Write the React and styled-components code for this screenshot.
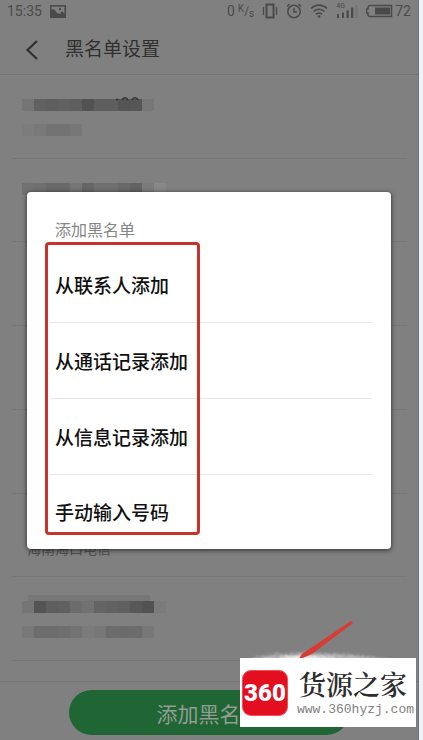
import styled, { createGlobalStyle } from 'styled-components';

const contacts = [
	{
		name: ['#757575', '#616161', '#5f5f5f', '#616161', '#5f5f5f', '#525252', '#5e5e5e', '#5e5e5e', '#555555', '#565656', '#777777'],
		place: ['#7c7c7c', '#797979', '#727272', '#727272', '#777777'],
		digits: true,
	},
	{
		name: ['#727272', '#707070', '#6a6a6a', '#6a6a6a', '#757575', '#666666', '#707070', '#707070', '#696969', '#636363', '#7b7b7b', '#888888'],
	},
	{},
	{},
	{},
	{ placeText: '海南海口电信' },
	{
		name: ['#767676', '#545454', '#5e5e5e', '#606060', '#6c6c6c', '#727272', '#646464', '#626262', '#606060', '#585858', '#525252', '#7b7b7b'],
		place: ['#787878', '#6d6d6d', '#6d6d6d', '#6f6f6f', '#737373', '#7b7b7b', '#777777', '#6c6c6c', '#6b6b6b', '#6c6c6c', '#777777'],
		shade: true,
	},
];

const options = ['从联系人添加', '从通话记录添加', '从信息记录添加', '手动输入号码'];

const Mosaic = ({ cells, children }) => (
	<MosaicLine>
		{cells.map((color, i) => (
			<MosaicCell key={i} $color={color} />
		))}
		{children}
	</MosaicLine>
);

const StatusIcons = () => (
	<StatusGroup>
		<Speed>
			0
			<SpeedUnit>
				<sup>K</sup>/<sub>s</sub>
			</SpeedUnit>
		</Speed>
		<svg width='16' height='16' viewBox='0 0 16 16' fill='none' stroke='currentColor'>
			<rect x='4.5' y='1.5' width='7' height='13' strokeWidth='2' />
			<path d='M1.5 4v8M14.5 4v8' strokeWidth='1.3' />
		</svg>
		<svg width='16' height='16' viewBox='0 0 16 16' fill='none' stroke='currentColor' strokeWidth='1.5'>
			<circle cx='8' cy='8.5' r='6.2' />
			<path d='M8 5v4h3M1 3.5 3.5 1M15 3.5 12.5 1' />
		</svg>
		<svg width='18' height='16' viewBox='0 0 18 16' fill='none' stroke='currentColor' strokeWidth='1.7'>
			<path d='M1 5.5C5.5 1 12.5 1 17 5.5M3.5 8.5c3-3 8-3 11 0M6 11.3c1.700-1.600 4.300-1.600 6 0' />
			<circle cx='9' cy='13.500' r='1.300' fill='currentColor' stroke='none' />
		</svg>
		<Signal>
			<Network>4G</Network>
			<svg width='22' height='16' viewBox='0 0 22 16' fill='currentColor'>
				<path d='M1 11h2v4H1zM6 9.500h2V15H6zM10.500 7.500h2.300V15h-2.300zM15 4.500h2.300V15H15z' />
				<path d='M19.500 2h2v13h-2z' opacity='.25' />
			</svg>
		</Signal>
		<Battery>
			<svg width='27' height='14' viewBox='1 0 27 14'>
				<path
					d='M5 1.500h21.500v11H5a2 2 0 0 1-2-2V9H1.500V5H3V3.500a2 2 0 0 1 2-2z'
					fill='none'
					stroke='currentColor'
					strokeWidth='1.500'
				/>
				<path d='M10 3.500h15v7H10z' fill='currentColor' />
			</svg>
			72
		</Battery>
	</StatusGroup>
);

const App = () => {
	return (
		<Page>
			<GlobalStyle />
			<Screen>
				<StatusBar>
					<StatusGroup>
						<span>15:35</span>
						<svg width='16' height='13' viewBox='0 0 16 13'>
							<rect x='.8' y='.8' width='14.400' height='11.400' fill='none' stroke='currentColor' strokeWidth='1.600' />
							<path d='M1 12V5l3-1 3 4 3 1 2-3 3 3v3z' fill='currentColor' />
							<circle cx='10' cy='4' r='1.200' fill='currentColor' />
						</svg>
					</StatusGroup>
					<StatusIcons />
				</StatusBar>

				<Header>
					<BackButton aria-label='返回'>
						<svg width='14' height='20' viewBox='0 0 14 20' fill='none' stroke='currentColor' strokeWidth='2.200'>
							<path d='M12 1 2.500 10 12 19' />
						</svg>
					</BackButton>
					<h1>黑名单设置</h1>
				</Header>

				<ContactList>
					{contacts.map((contact, i) => (
						<ContactRow key={i}>
							{contact.shade && <Shade />}
							<Mosaic cells={contact.name || []}>
								{contact.digits && (
									<Digits width='28' height='5' viewBox='0 0 28 5' fill='none' stroke='#333' strokeWidth='1.500'>
										<path d='M2 4l2-1M8 4c1-3 5-3 6 0M18 4c1-3 5-3 6 0' />
									</Digits>
								)}
							</Mosaic>
							{contact.placeText ? <Place>{contact.placeText}</Place> : <Mosaic cells={contact.place || []} />}
						</ContactRow>
					))}
				</ContactList>

				<Footer>
					<AddButton>添加黑名单</AddButton>
				</Footer>

				<Overlay>
					<Dialog role='dialog' aria-labelledby='dialog-title'>
						<h2 id='dialog-title'>添加黑名单</h2>
						{options.map((option) => (
							<Option key={option}>{option}</Option>
						))}
						<Highlight />
					</Dialog>
				</Overlay>

				<Pointer width='140' height='40' viewBox='0 0 140 40'>
					<defs>
						<filter id='spray' x='-10%' y='-50%' width='120%' height='200%'>
							<feTurbulence type='fractalNoise' baseFrequency='.6' numOctaves='2' result='noise' />
							<feDisplacementMap in='SourceGraphic' in2='noise' scale='9' />
							<feGaussianBlur stdDeviation='.8' />
						</filter>
					</defs>
					<path d='M2 39 14 36 35 34 60 33 100 35 138 39V40H2z' fill='#bcbcbc' filter='url(#spray)' />
					<path d='M22 40 38 37 70 37 92 40z' fill='#fff' filter='url(#spray)' />
					<path d='M101 1 103 3 62 34 48 40 52 34z' fill='#d93a32' />
				</Pointer>

				<Watermark>
					<Logo>360</Logo>
					<Brand>
						<strong>货源之家</strong>
						<span>www.360hyzj.com</span>
					</Brand>
				</Watermark>
			</Screen>
		</Page>
	);
};

const GlobalStyle = createGlobalStyle`
	* {
		box-sizing: border-box;
	}

	body {
		margin: 0;
		font-family: Roboto, 'Noto Sans CJK SC', sans-serif;
	}

	h1,
	h2 {
		margin: 0;
		font-weight: 400;
	}

	button {
		padding: 0;
		border: none;
		background: transparent;
		font-family: inherit;
	}

	svg {
		display: block;
		flex-shrink: 0;
	}
`;

const Page = styled.div`
	min-height: 100vh;
	display: flex;
	background-color: #eff3f8;
	padding-right: 4px;
`;

const Screen = styled.main`
	position: relative;
	flex: 1;
	min-width: 0;
	display: flex;
	flex-direction: column;
	background-color: #808080;
	border-right: 1px solid #6b7580;
	overflow: hidden;
`;

const StatusBar = styled.div`
	display: flex;
	justify-content: space-between;
	align-items: center;
	height: 22px;
	padding: 0 7px;
	color: #4a4a4a;
	font-size: 14px;
`;

const StatusGroup = styled.div`
	display: flex;
	align-items: center;
	gap: 8px;
`;

const Speed = styled.span`
	display: flex;
	align-items: center;
	gap: 3px;
`;

const SpeedUnit = styled.span`
	font-size: 12px;
	line-height: 14px;

	sup,
	sub {
		font-size: 10px;
		line-height: 0;
	}

	sup {
		vertical-align: 3px;
	}

	sub {
		vertical-align: -2px;
	}
`;

const Signal = styled.div`
	position: relative;
`;

const Network = styled.span`
	position: absolute;
	top: 0;
	left: 0;
	font-size: 7px;
	line-height: 7px;
`;

const Battery = styled.div`
	display: flex;
	align-items: center;
	gap: 2px;
`;

const Header = styled.header`
	display: flex;
	align-items: center;
	gap: 26px;
	height: 53px;
	padding: 3px 0 0 25px;
	border-bottom: 1px solid #747474;
	color: #303030;

	h1 {
		font-size: 19px;
		line-height: 28px;
	}
`;

const BackButton = styled.button`
	color: #303030;
`;

const ContactList = styled.ul`
	flex: 1;
	display: grid;
	grid-template-rows: repeat(7, 1fr);
	margin: 0;
	padding: 0 11px 20px 12px;
	list-style: none;
`;

const ContactRow = styled.li`
	position: relative;
	display: flex;
	flex-direction: column;
	gap: 13px;
	padding: 24px 10px 0;
	border-bottom: 1px solid #767676;
`;

const MosaicLine = styled.div`
	position: relative;
	display: flex;
	height: 12px;
`;

const MosaicCell = styled.span`
	width: 12px;
	background-color: ${({ $color }) => $color};
`;

const Digits = styled.svg`
	position: absolute;
	top: -3px;
	left: 92px;
`;

const Shade = styled.span`
	position: absolute;
	top: 18px;
	left: 16px;
	width: 122px;
	height: 6px;
	background-color: #777777;
`;

const Place = styled.span`
	padding-left: 5px;
	font-size: 14px;
	line-height: 12px;
	color: #505050;
`;

const Footer = styled.footer`
	display: flex;
	padding: 8px 69px 5px;
	border-top: 1px solid #747474;
`;

const AddButton = styled.button`
	flex: 1;
	height: 45px;
	border-radius: 23px;
	background-color: #1f6634;
	color: #929c94;
	font-size: 21px;
`;

const Overlay = styled.div`
	position: absolute;
	inset: 0;
	display: flex;
	align-items: center;
	padding: 0 27px;
`;

const Dialog = styled.section`
	position: relative;
	flex: 1;
	display: flex;
	flex-direction: column;
	padding: 0 19px 0 23px;
	border-radius: 4px;
	background-color: white;
	box-shadow: 0 1px 5px rgba(0, 0, 0, 0.7);

	h2 {
		padding: 27px 5px 4px;
		font-size: 16px;
		line-height: 24px;
		color: #858585;
	}
`;

const Option = styled.button`
	height: 76px;
	padding: 0 5px;
	border-bottom: 1px solid #e8e8e8;
	font-size: 19px;
	font-weight: 500;
	text-align: left;
	color: #111;

	&:nth-last-child(2) {
		height: 74px;
		border-bottom: none;
	}
`;

const Highlight = styled.div`
	position: absolute;
	inset: 50px 191px 14px 18px;
	border: 3px solid #c8322c;
	border-radius: 4px;
	pointer-events: none;
`;

const Pointer = styled.svg`
	position: absolute;
	right: 28px;
	bottom: 80px;
`;

const Watermark = styled.aside`
	position: absolute;
	right: 2px;
	bottom: 13px;
	display: flex;
	align-items: center;
	gap: 9px;
	height: 69px;
	padding: 0 2px;
	background-color: white;
`;

const Logo = styled.div`
	display: grid;
	place-items: center;
	width: 46px;
	height: 46px;
	border: 1px solid #f0505a;
	border-radius: 9px;
	background-color: #e30f20;
	color: white;
	font-family: 'Liberation Sans Narrow', Roboto, sans-serif;
	font-size: 24px;
	font-weight: 900;
`;

const Brand = styled.div`
	display: flex;
	flex-direction: column;
	gap: 2px;

	strong {
		padding-left: 2px;
		font-family: 'Noto Serif CJK SC', 'Noto Sans CJK SC', serif;
		font-size: 27px;
		font-weight: 600;
		line-height: 32px;
		color: #2d2d2d;
	}

	span {
		font-family: 'Liberation Mono', monospace;
		font-size: 13px;
		line-height: 16px;
		color: #808080;
	}
`;

export default App;
